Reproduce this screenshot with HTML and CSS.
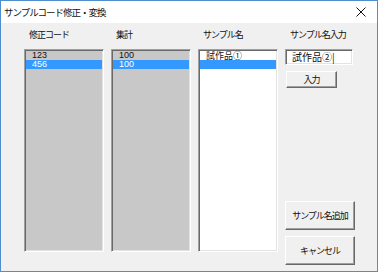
FILE: index.html
```html
<!DOCTYPE html>
<html lang="ja">
<head>
    <meta charset="UTF-8">
    <title>サンプルコード修正・変換</title>
    <link rel="stylesheet" href="styles.css">
</head>
<body>
    <div class="window">
        <div class="titlebar">
            <span class="title">サンプルコード修正・変換</span>
            <span class="close">
                <svg width="10" height="10" viewBox="0 0 10 10"><path d="M0.5 0.5 L9.5 9.5 M9.5 0.5 L0.5 9.5" stroke="#111" stroke-width="1"/></svg>
            </span>
        </div>
        <div class="content">
            <div class="column">
                <div class="label">修正コード</div>
                <div class="listbox grey">
                    <div class="row num">123</div>
                    <div class="row num selected">456</div>
                </div>
            </div>
            <div class="column">
                <div class="label">集計</div>
                <div class="listbox grey">
                    <div class="row num">100</div>
                    <div class="row num selected">100</div>
                </div>
            </div>
            <div class="column">
                <div class="label">サンプル名</div>
                <div class="listbox">
                    <div class="row">試作品①</div>
                    <div class="row selected"></div>
                </div>
            </div>
            <div class="column side">
                <div class="label">サンプル名入力</div>
                <div class="textbox">試作品②|</div>
                <button class="btn small">入力</button>
                <div class="spacer"></div>
                <button class="btn large">サンプル名追加</button>
                <button class="btn large">キャンセル</button>
            </div>
        </div>
    </div>
</body>
</html>
```

FILE: styles.css
```css
* {
    margin: 0;
    padding: 0;
    box-sizing: border-box;
}

body {
    width: 378px;
    height: 272px;
    overflow: hidden;
    font-family: "Noto Sans CJK JP", "Noto Sans", sans-serif;
    font-size: 9px;
    color: #111;
}

.window {
    width: 378px;
    height: 272px;
    background: #f0f0f0;
    border: 1px solid #4f8fd1;
    display: flex;
    flex-direction: column;
}

.titlebar {
    height: 22px;
    background: #fff;
    display: flex;
    align-items: center;
    justify-content: space-between;
    padding: 0 11px 0 3px;
    flex-shrink: 0;
}

.title {
    font-size: 9.5px;
    letter-spacing: -1px;
    line-height: 12px;
    white-space: nowrap;
}

.close {
    display: flex;
}

.content {
    flex: 1;
    display: flex;
    gap: 7px;
    padding: 5px 0 0 23px;
}

.column {
    width: 80px;
    display: flex;
    flex-direction: column;
}

.label {
    height: 14px;
    line-height: 14px;
    padding-left: 5px;
    margin-bottom: 7px;
    font-size: 9px;
    letter-spacing: -1px;
    white-space: nowrap;
}

.listbox {
    height: 203px;
    background: #fff;
    border-top: 1px solid #a0a0a0;
    border-left: 1px solid #a0a0a0;
    border-right: 1px solid #fff;
    border-bottom: 1px solid #fff;
    box-shadow: inset 1px 1px 0 #696969, inset -1px -1px 0 #e3e3e3;
    padding: 1px 1px 0 1px;
}

.listbox.grey {
    background: #c8c8c8;
}

.row {
    height: 9px;
    line-height: 9px;
    padding-left: 6px;
    font-size: 9px;
    white-space: nowrap;
}

.row.num {
    font-family: "Liberation Sans", sans-serif;
}

.row.selected {
    background: #3399ff;
    color: #fff;
}

.side {
    width: 70px;
}

.textbox {
    width: 68px;
    height: 16px;
    background: #fff;
    border-top: 1px solid #a0a0a0;
    border-left: 1px solid #a0a0a0;
    border-right: 1px solid #fff;
    border-bottom: 1px solid #fff;
    box-shadow: inset 1px 1px 0 #696969, inset -1px -1px 0 #e3e3e3;
    padding-left: 6px;
    line-height: 13px;
    font-size: 10px;
    white-space: nowrap;
    overflow: hidden;
}

.btn {
    font-family: "Noto Sans CJK JP", "Noto Sans", sans-serif;
    font-size: 9px;
    letter-spacing: -1px;
    white-space: nowrap;
    color: #111;
    background: #f0f0f0;
    border-top: 1px solid #fff;
    border-left: 1px solid #fff;
    border-right: 1px solid #696969;
    border-bottom: 1px solid #696969;
    box-shadow: inset -1px -1px 0 #a0a0a0;
}

.btn.small {
    width: 51px;
    height: 17px;
    margin-top: 6px;
    margin-left: 1px;
}

.btn.large {
    width: 70px;
    height: 29px;
    margin-bottom: 6px;
}

.spacer {
    flex: 1;
}
```
